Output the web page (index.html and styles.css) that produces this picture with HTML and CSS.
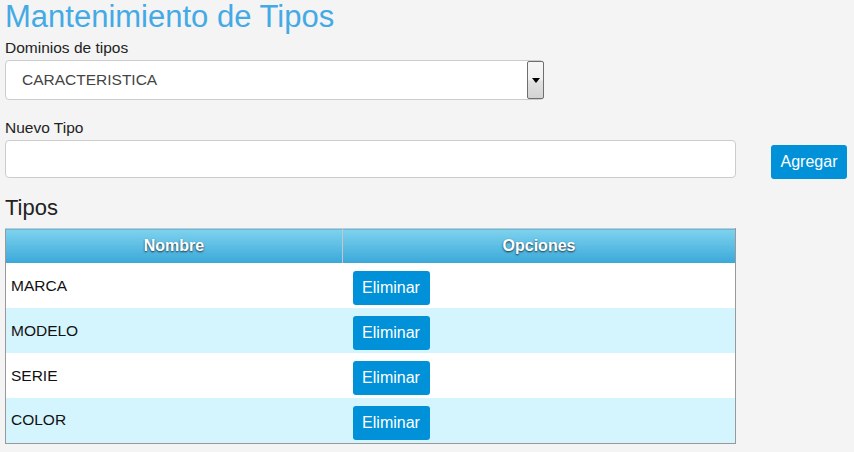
FILE: index.html
```html
<!DOCTYPE html>
<html lang="es">
<head>
<meta charset="utf-8">
<title>Mantenimiento de Tipos</title>
<link rel="stylesheet" href="styles.css">
</head>
<body>
<div class="page">
  <h1 class="title">Mantenimiento de Tipos</h1>
  <div class="label">Dominios de tipos</div>
  <div class="select">
    <span class="select-value">CARACTERISTICA</span>
    <span class="select-btn"><span class="arrow"></span></span>
  </div>
  <div class="label label-nuevo">Nuevo Tipo</div>
  <div class="add-row">
    <input class="input" type="text">
    <button class="btn btn-add">Agregar</button>
  </div>
  <h2 class="subtitle">Tipos</h2>
  <table class="grid">
    <thead>
      <tr><th class="col-name">Nombre</th><th class="col-opt">Opciones</th></tr>
    </thead>
    <tbody>
      <tr><td class="cell-name">MARCA</td><td class="cell-opt"><button class="btn btn-del">Eliminar</button></td></tr>
      <tr class="alt"><td class="cell-name">MODELO</td><td class="cell-opt"><button class="btn btn-del">Eliminar</button></td></tr>
      <tr><td class="cell-name">SERIE</td><td class="cell-opt"><button class="btn btn-del">Eliminar</button></td></tr>
      <tr class="alt"><td class="cell-name">COLOR</td><td class="cell-opt"><button class="btn btn-del">Eliminar</button></td></tr>
    </tbody>
  </table>
</div>
</body>
</html>
```

FILE: styles.css
```css
html, body {
  margin: 0;
  padding: 0;
  background: #f4f4f4;
}
body {
  font-family: "Liberation Sans", Arial, sans-serif;
  color: #222;
}
.page {
  padding: 0 5px;
  display: flex;
  flex-direction: column;
  align-items: flex-start;
}
.title {
  margin: 0;
  font-size: 31px;
  line-height: 34px;
  font-weight: normal;
  color: #43aae6;
}
.label {
  font-size: 15.5px;
  line-height: 20px;
  margin-top: 4px;
  margin-bottom: 2px;
  color: #222;
}
.label-nuevo {
  margin-top: 18px;
}
.select {
  box-sizing: border-box;
  width: 539px;
  height: 40px;
  border: 1px solid #ccc;
  border-radius: 4px;
  background: #fff;
  display: flex;
  align-items: stretch;
}
.select-value {
  flex: 1;
  padding-left: 16px;
  font-size: 15.5px;
  line-height: 38px;
  color: #444;
}
.select-btn {
  box-sizing: border-box;
  width: 17px;
  border: 1px solid #6e6e6e;
  border-radius: 2px;
  margin-right: -1px;
  background: linear-gradient(#f6f6f6 0%, #f0f0f0 50%, #e2e2e2 52%, #d3d3d3 100%);
  display: flex;
  align-items: center;
  justify-content: center;
}
.arrow {
  width: 0;
  height: 0;
  border-left: 4px solid transparent;
  border-right: 4px solid transparent;
  border-top: 5px solid #000;
}
.add-row {
  display: flex;
  align-items: flex-start;
  gap: 35px;
}
.input {
  box-sizing: border-box;
  width: 731px;
  height: 38px;
  margin: 0;
  border: 1px solid #ccc;
  border-radius: 4px;
  background: #fff;
  padding: 0 10px;
  font-size: 15px;
  font-family: inherit;
}
.btn {
  box-sizing: border-box;
  border: 0;
  border-radius: 3px;
  background: #0091d9;
  color: #fff;
  font-family: "Liberation Sans", Arial, sans-serif;
  font-size: 16px;
  padding: 0;
  cursor: pointer;
}
.btn-add {
  margin-top: 5px;
  width: 76px;
  height: 34px;
}
.subtitle {
  margin: 16px 0 7px;
  font-size: 22px;
  line-height: 26px;
  font-weight: normal;
  color: #222;
}
.grid {
  width: 731px;
  border-collapse: collapse;
  border: 1px solid #999;
  border-top-color: #c8c8c8;
  background: #fff;
}
.grid th {
  height: 34px;
  padding: 0;
  background: linear-gradient(#7ed2ee, #3aa8d9);
  color: #fff;
  font-size: 16px;
  font-weight: bold;
  text-shadow: 0 1px 2px rgba(0, 0, 0, 0.75);
}
.col-name {
  width: 336px;
  border-right: 1px solid #c6c6c6;
}
.grid td {
  height: 45px;
  padding: 0;
  box-sizing: border-box;
}
.alt td {
  background: #d4f5fd;
}
.cell-name {
  padding: 0 5px !important;
  font-size: 15.5px;
  color: #111;
  vertical-align: middle;
}
.cell-opt {
  vertical-align: top;
  padding: 8px 10px 0 !important;
}
.btn-del {
  width: 77px;
  height: 34px;
  display: block;
}
```
